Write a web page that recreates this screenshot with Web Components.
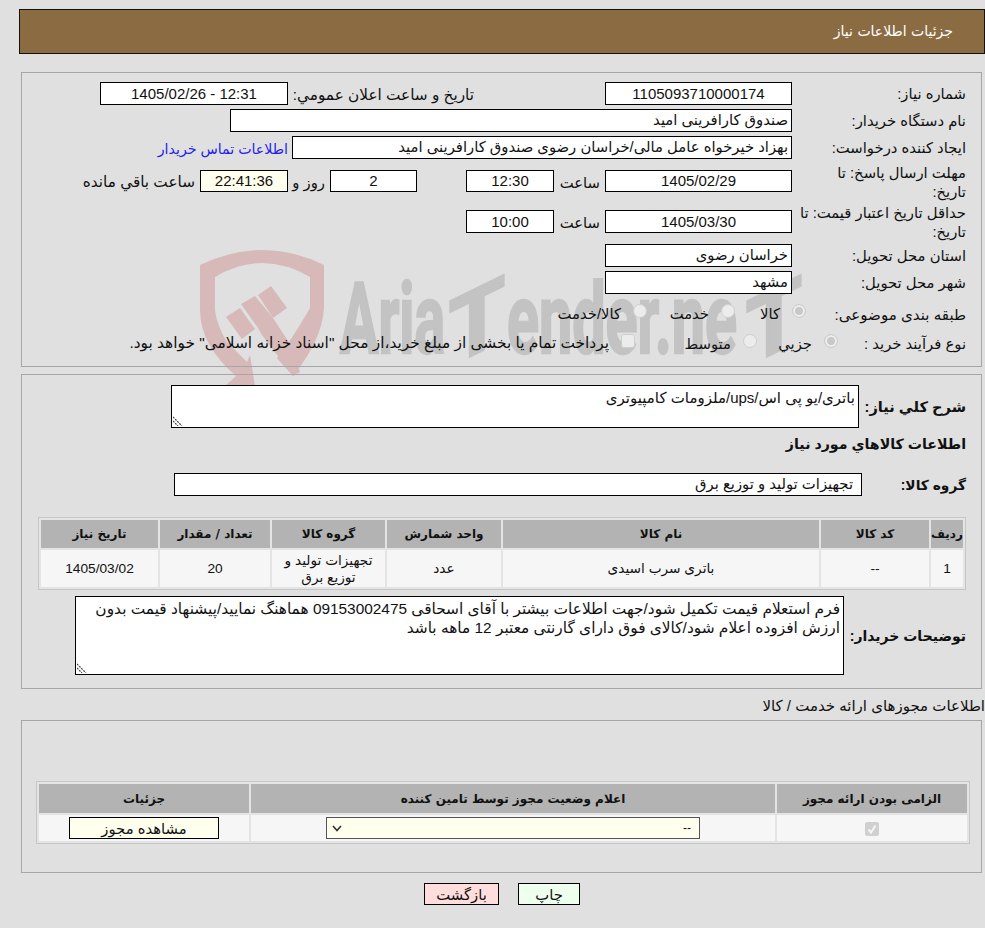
<!DOCTYPE html>
<html lang="fa" dir="rtl">
<head>
<meta charset="UTF-8">
<title>جزئیات اطلاعات نیاز</title>
<style>
  html, body { margin: 0; padding: 0; background: #e0e0e0; }
  body { position: relative; height: 928px; overflow: hidden; font: 14.8px "Liberation Sans", "DejaVu Sans", sans-serif; color: #111; }
  .page { position: relative; }
</style>
</head>
<body>
<water-mark></water-mark>
<div class="page">
  <page-header>جزئیات اطلاعات نیاز</page-header>

  <info-panel top="9" style="margin-top:18px;height:295px">
    <form-row label="شماره نیاز:" h="23">
      <data-box w="187" num>1105093710000174</data-box>
      <form-label w="317" pad="131" size="15.3">تاریخ و ساعت اعلان عمومي:</form-label>
      <data-box w="188" num ltr>1405/02/26 - 12:31</data-box>
    </form-row>
    <form-row label="نام دستگاه خریدار:" h="23" gap="4">
      <data-box w="562" start>صندوق کارافرینی امید</data-box>
    </form-row>
    <form-row label="ایجاد کننده درخواست:" h="23" gap="4">
      <data-box w="500" start>بهزاد خیرخواه عامل مالی/خراسان رضوی صندوق کارافرینی امید</data-box>
      <form-label pad="4" color="#2222ee" size="14.2">اطلاعات تماس خریدار</form-label>
    </form-row>
    <form-row label="مهلت ارسال پاسخ: تا<br>تاریخ:" h="38" gap="3" ltop="4">
      <data-box w="187" h="22" num>1405/02/29</data-box>
      <form-label w="51" pad="5">ساعت</form-label>
      <data-box w="88" h="22" num>12:30</data-box>
      <form-label w="49"></form-label>
      <data-box w="87" h="22" num>2</data-box>
      <form-label w="42" pad="5">روز و</form-label>
      <data-box w="88" h="22" num bg="#ffffee">22:41:36</data-box>
      <form-label pad="5" size="15.3">ساعت باقي مانده</form-label>
    </form-row>
    <form-row label="حداقل تاریخ اعتبار قیمت: تا<br>تاریخ:" h="38" gap="2" ltop="4">
      <data-box w="187" num>1405/03/30</data-box>
      <form-label w="51" pad="5">ساعت</form-label>
      <data-box w="88" num>10:00</data-box>
    </form-row>
    <form-row label="استان محل تحویل:" h="23" gap="4">
      <data-box w="187" start>خراسان رضوی</data-box>
    </form-row>
    <form-row label="شهر محل تحویل:" h="23" gap="4">
      <data-box w="187" start>مشهد</data-box>
    </form-row>
    <form-row label="طبقه بندی موضوعی:" h="20" gap="9" lsize="15.1">
      <choice-mark checked w="71" inset="-14">کالا</choice-mark>
      <choice-mark w="88">خدمت</choice-mark>
      <choice-mark w="88">کالا/خدمت</choice-mark>
    </form-row>
    <form-row label="نوع فرآیند خرید :" h="20" gap="10">
      <choice-mark checked w="81" inset="-46">جزیي</choice-mark>
      <choice-mark w="122">متوسط</choice-mark>
      <choice-mark w="500" square size="15.4">پرداخت تمام یا بخشی از مبلغ خرید،از محل "اسناد خزانه اسلامی" خواهد بود.</choice-mark>
    </form-row>
  </info-panel>

  <info-panel top="10" style="margin-top:7px;height:315px">
    <form-row label="شرح كلي نیاز:" bold lsize="14.6" lw="107" h="43">
      <note-box w="688" h="43" size="15">باتری/یو پی اس/ups/ملزومات کامپیوتری</note-box>
    </form-row>
    <form-row h="20" gap="5" lw="0"><form-label bold size="14.2">اطلاعات کالاهاي مورد نیاز</form-label></form-row>
    <form-row label="گروه کالا:" bold lw="104" h="23" gap="20">
      <data-box w="688" start pad="8">تجهیزات تولید و توزیع برق</data-box>
    </form-row>
    <goods-table style="margin-top:21px"></goods-table>
    <form-row label="توضیحات خریدار:" bold lsize="14" lw="122" h="79" gap="6">
      <note-box w="769" h="79" size="15.4">فرم استعلام قیمت تکمیل شود/جهت اطلاعات بیشتر با آقای اسحاقی 09153002475 هماهنگ نمایید/پیشنهاد قیمت بدون ارزش افزوده اعلام شود/کالای فوق دارای گارنتی معتبر 12 ماهه باشد</note-box>
    </form-row>
  </info-panel>

  <section-title>اطلاعات مجوزهای ارائه خدمت / کالا</section-title>

  <info-panel top="60" style="margin-top:5px;height:153px">
    <permit-table></permit-table>
  </info-panel>

  <action-bar>
    <action-button bg="#eeffee" w="62">چاپ</action-button>
    <action-button bg="#ffdddd" w="75">بازگشت</action-button>
  </action-bar>
</div>

<script>
  // small helper: every element gets an open shadow root with its own markup
  class Base extends HTMLElement {
    constructor() {
      super();
      this.attachShadow({ mode: 'open' });
    }
    connectedCallback() {
      this.shadowRoot.innerHTML = this.markup();
    }
  }

  class WaterMark extends Base {
    markup() {
      const ink = 'font-family="Roboto, sans-serif" font-weight="700" fill="#c3c3c3" stroke="#c3c3c3" stroke-width="2.5"';
      return `
        <style>
          :host { position: absolute; left: 0; top: 0; width: 985px; height: 928px; display: block; }
          svg { display: block; }
        </style>
        <svg width="985" height="928" viewBox="0 0 985 928" direction="ltr">
          <g fill="#d8b9ba">
            <path fill-rule="evenodd" d="M200 265 Q232 250 262 250 Q294 250 324 265 L324 308 Q322 340 293 376 Q280 362 277 358 Q293 338 310 308 L310 277 Q286 263 262 263 Q238 263 215 277 L215 310 Q217 326 227 342 L247 362 L250 355 L255 386 L225 386 L236 376 Q200 345 200 310 Z"/>
            <path d="M226 317 L240 308 L255 329 L242 339 Z"/>
            <path d="M241 304 L255 296 L273 318 L294 350 L300 372 L293 376 L262 335 L258 328 Z"/>
            <path d="M258 295 L271 286 L287 308 L273 318 Z"/>
          </g>
          <text x="340" y="353" font-size="98" ${ink} textLength="105" lengthAdjust="spacingAndGlyphs">Aria</text>
          <text text-anchor="middle" font-size="91" transform="translate(477 353) skewY(-26)" ${ink}>T</text>
          <text x="507" y="353" font-size="98" ${ink} textLength="230" lengthAdjust="spacingAndGlyphs">ender.ne</text>
          <text text-anchor="middle" font-size="91" transform="translate(774 353) skewY(-26)" ${ink}>T</text>
        </svg>`;
    }
  }

  class PageHeader extends Base {
    markup() {
      return `
        <style>
          :host { display: block; box-sizing: border-box; height: 45px; margin: 9px 0 0 19px;
                  background: #8b6c42; border: 1px solid #111; color: #fff; font: 14px "DejaVu Sans", sans-serif;
                  line-height: 43px; padding-right: 31px; }
        </style>
        <slot></slot>`;
    }
  }

  class InfoPanel extends Base {
    markup() {
      const top = this.getAttribute('top') || 0;
      return `
        <style>
          :host { display: block; box-sizing: border-box; margin: 0 3px 0 0; margin-left: 21px;
                  border: 1px solid #a6a6a6; padding: ${top}px 15px 0 0; }
        </style>
        <slot></slot>`;
    }
  }

  class FormRow extends Base {
    markup() {
      const h = this.getAttribute('h') || 23;
      const gap = this.getAttribute('gap') || 0;
      const lw = this.getAttribute('lw') || 174;
      const ltop = this.getAttribute('ltop') || 2;
      const lsize = this.getAttribute('lsize');
      const label = this.getAttribute('label') || '';
      const bold = this.hasAttribute('bold');
      return `
        <style>
          :host { display: flex; align-items: center; height: ${h}px; margin-top: ${gap}px; }
          .label { width: ${lw}px; flex: none; line-height: 19px; white-space: nowrap; padding-top: ${lw > 0 ? ltop : 0}px;
                   ${bold ? 'font-weight: 700; font-size: 13.8px;' : ''}
                   ${lsize ? `font-size: ${lsize}px;` : ''} }
          .body { display: flex; align-items: center; flex: 1; }
        </style>
        <div class="label">${label}</div>
        <div class="body"><slot></slot></div>`;
    }
  }

  class FormLabel extends Base {
    markup() {
      const w = this.getAttribute('w');
      const pad = this.getAttribute('pad') || 0;
      const color = this.getAttribute('color') || 'inherit';
      const size = this.getAttribute('size');
      const bold = this.hasAttribute('bold');
      return `
        <style>
          :host { display: block; flex: none; box-sizing: border-box; ${w ? `width:${w}px;` : ''}
                  ${size ? `font-size:${size}px;` : ''}
                  padding-top: 2px; padding-right: ${pad}px; color: ${color}; white-space: nowrap; font-weight: ${bold ? 700 : 400}; }
        </style>
        <slot></slot>`;
    }
  }

  class DataBox extends Base {
    markup() {
      const w = this.getAttribute('w');
      const h = this.getAttribute('h') || 23;
      const bg = this.getAttribute('bg') || '#fff';
      const start = this.hasAttribute('start');
      const pad = this.getAttribute('pad') || 3;
      const num = this.hasAttribute('num');
      const ltr = this.hasAttribute('ltr');
      return `
        <style>
          :host { display: block; flex: none; box-sizing: border-box; width: ${w}px; height: ${h}px;
                  background: ${bg}; border: 1px solid #000; line-height: ${h - 2}px; white-space: nowrap; overflow: hidden;
                  text-align: ${start ? 'right' : 'center'}; padding: 0 ${pad}px;
                  ${num ? 'font-size: 15px;' : ''}
                  ${ltr ? 'direction: ltr;' : ''} }
        </style>
        <slot></slot>`;
    }
  }

  class NoteBox extends Base {
    markup() {
      const w = this.getAttribute('w');
      const h = this.getAttribute('h');
      const size = this.getAttribute('size') || 15;
      return `
        <style>
          :host { display: block; flex: none; position: relative; box-sizing: border-box; width: ${w}px; height: ${h}px;
                  background: #fff; border: 1px solid #000; padding: 2px 3px; line-height: 19px; font-size: ${size}px; }
          svg { position: absolute; left: 1px; bottom: 1px; }
        </style>
        <slot></slot>
        <svg width="10" height="10" viewBox="0 0 10 10" fill="none" stroke="#444" stroke-width="1.2">
          <path d="M0 1 L9 10 M0 5 L5 10" stroke-dasharray="2 1"/>
        </svg>`;
    }
  }

  class ChoiceMark extends Base {
    markup() {
      const w = this.getAttribute('w') || 70;
      const inset = this.getAttribute('inset') || 0;
      const size = this.getAttribute('size');
      const checked = this.hasAttribute('checked');
      const square = this.hasAttribute('square');
      return `
        <style>
          :host { display: flex; align-items: center; flex: none; width: ${w}px; margin-right: ${inset}px; white-space: nowrap;
                  ${size ? `font-size:${size}px;` : ''} }
          i { display: block; box-sizing: border-box; width: 14px; height: 14px; margin: -4px 0 0 12px; flex: none;
              border: 1px solid #cfcfcf; border-radius: ${square ? '3px' : '50%'}; background: ${checked ? '#c8c8c8' : '#ececec'};
              box-shadow: ${checked ? 'inset 0 0 0 2px #efefef' : 'none'}; }
        </style>
        <i></i><span><slot></slot></span>`;
    }
  }

  // shared look for the two grey-headed tables
  const tableStyle = `
    :host { display: block; }
    table { border-collapse: separate; border-spacing: 2px; border: 1px solid #c6c6c6; background: #e4e4e4; table-layout: fixed; }
    th { background: #b3b3b3; font: 700 12px "DejaVu Sans", sans-serif; height: 28px; padding: 0; }
    td { background: #f6f6f6; text-align: center; padding: 0; font-size: 13.7px; line-height: 17px; }
  `;

  class GoodsTable extends Base {
    markup() {
      return `
        <style>
          ${tableStyle}
          :host { margin-left: 17px; }
          td { height: 37px; }
        </style>
        <table style="width:927px">
          <colgroup>
            <col style="width:32px"><col style="width:108px"><col style="width:316px"><col style="width:114px">
            <col style="width:113px"><col style="width:110px"><col style="width:117px">
          </colgroup>
          <tr><th>ردیف</th><th>کد کالا</th><th>نام کالا</th><th>واحد شمارش</th><th>گروه کالا</th><th>تعداد / مقدار</th><th>تاریخ نیاز</th></tr>
          <tr><td>1</td><td>--</td><td>باتری سرب اسیدی</td><td>عدد</td><td>تجهیزات تولید و توزیع برق</td><td>20</td><td>1405/03/02</td></tr>
        </table>`;
    }
  }

  class PermitTable extends Base {
    markup() {
      return `
        <style>
          ${tableStyle}
          :host { margin-right: -4px; }
          th { height: 29px; }
          td { height: 26px; }
          .check { display: inline-block; box-sizing: border-box; width: 14px; height: 14px; background: #d0d0d0;
                   border-radius: 2px; vertical-align: middle; }
          .check svg { display: block; }
          .pick { box-sizing: border-box; width: 374px; height: 22px; margin: 0 auto; background: #ffffee; border: 1px solid #555;
                  display: flex; justify-content: space-between; align-items: center; padding: 0 8px 0 5px; font-size: 12px; }
          .view { box-sizing: border-box; width: 150px; height: 22px; margin: 0 auto; background: #ffffee; border: 1px solid #000;
                  line-height: 22px; font-size: 14.8px; }
        </style>
        <table style="width:932px">
          <colgroup><col style="width:190px"><col style="width:524px"><col style="width:210px"></colgroup>
          <tr><th>الزامی بودن ارائه مجوز</th><th>اعلام وضعیت مجوز توسط تامین کننده</th><th>جزئیات</th></tr>
          <tr>
            <td><span class="check"><svg width="14" height="14" viewBox="0 0 14 14"><path d="M3.5 7.5 L6 10.5 L10.5 3.5" fill="none" stroke="#f5f5f5" stroke-width="2"/></svg></span></td>
            <td><div class="pick"><span>--</span><svg width="10" height="7" viewBox="0 0 10 7"><path d="M1 1 L5 5.5 L9 1" fill="none" stroke="#333" stroke-width="1.6"/></svg></div></td>
            <td><div class="view">مشاهده مجوز</div></td>
          </tr>
        </table>`;
    }
  }

  class SectionTitle extends Base {
    markup() {
      return `
        <style>
          :host { display: block; height: 26px; line-height: 34px; font-size: 15px; }
        </style>
        <slot></slot>`;
    }
  }

  class ActionBar extends Base {
    markup() {
      return `
        <style>
          :host { display: flex; justify-content: center; gap: 19px; margin-top: 10px; padding-left: 19px; }
        </style>
        <slot></slot>`;
    }
  }

  class ActionButton extends Base {
    markup() {
      const w = this.getAttribute('w');
      const bg = this.getAttribute('bg');
      return `
        <style>
          :host { display: block; box-sizing: border-box; width: ${w}px; height: 22px; background: ${bg};
                  border: 1px solid #000; text-align: center; line-height: 22px; }
        </style>
        <slot></slot>`;
    }
  }

  customElements.define('water-mark', WaterMark);
  customElements.define('page-header', PageHeader);
  customElements.define('info-panel', InfoPanel);
  customElements.define('form-row', FormRow);
  customElements.define('form-label', FormLabel);
  customElements.define('data-box', DataBox);
  customElements.define('note-box', NoteBox);
  customElements.define('choice-mark', ChoiceMark);
  customElements.define('goods-table', GoodsTable);
  customElements.define('permit-table', PermitTable);
  customElements.define('section-title', SectionTitle);
  customElements.define('action-bar', ActionBar);
  customElements.define('action-button', ActionButton);
</script>
</body>
</html>
